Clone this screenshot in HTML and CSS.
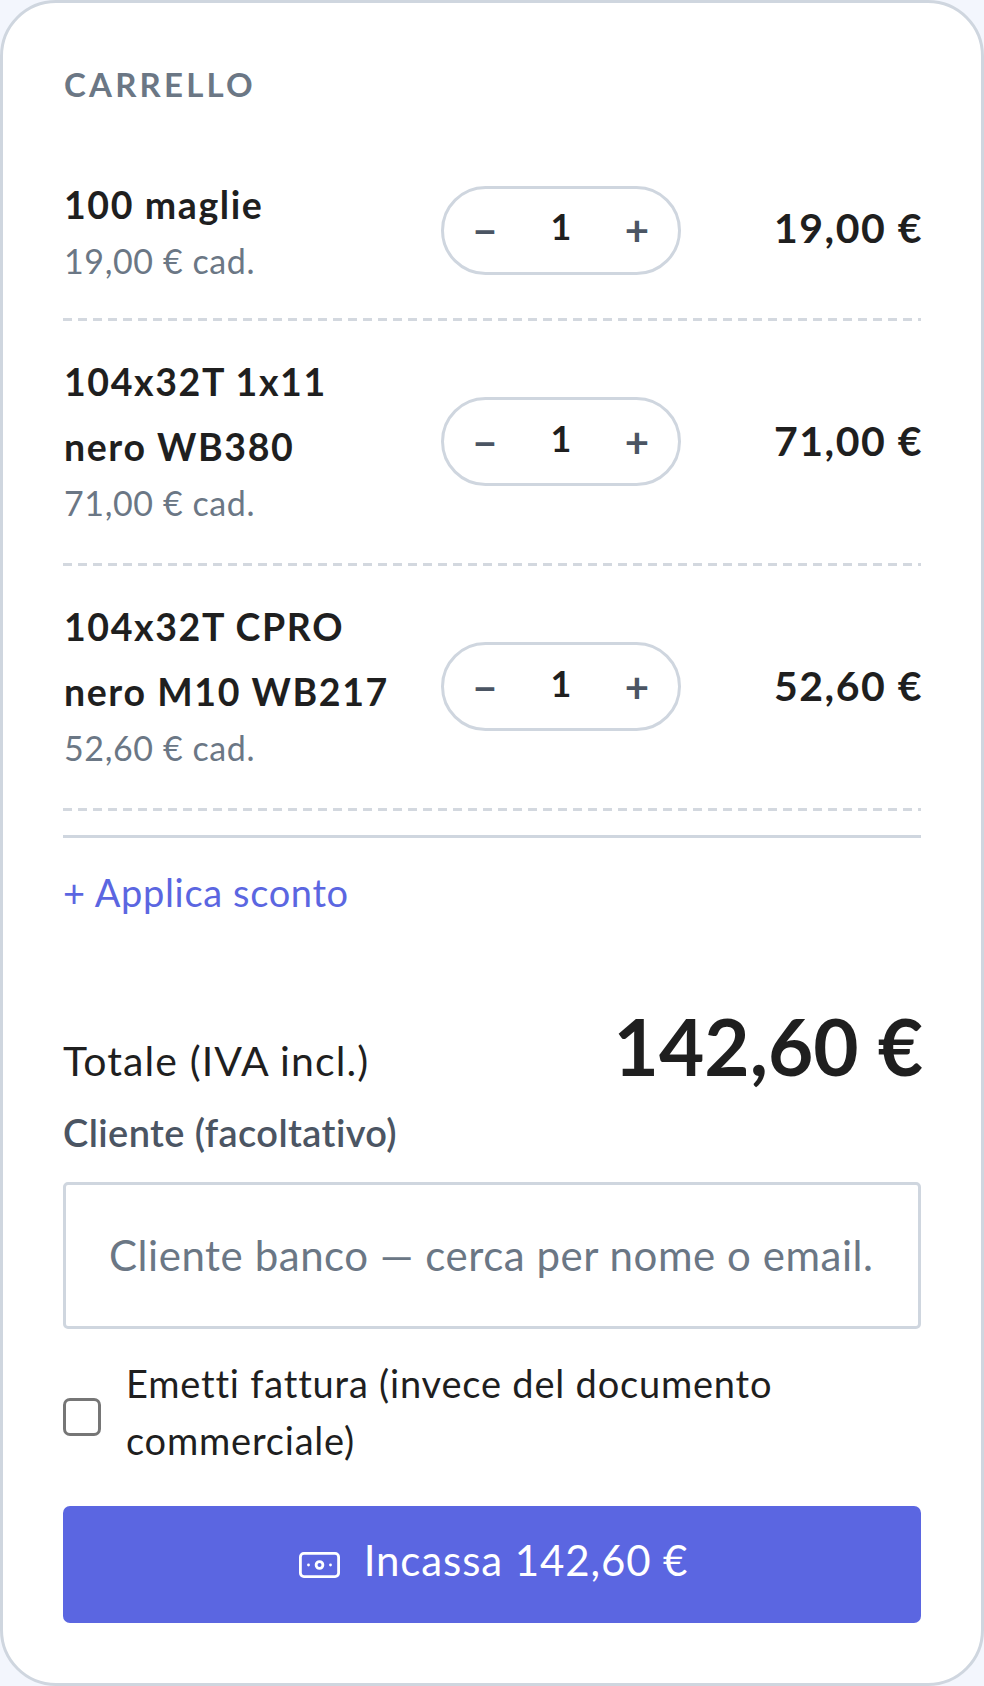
FILE: index.html
```html
<!DOCTYPE html>
<html lang="it">
<head>
  <meta charset="UTF-8">
  <title>Carrello</title>
  <link rel="stylesheet" href="styles.css">
</head>
<body>
  <div class="card">
    <h2 class="card-title">Carrello</h2>

    <div class="cart-row cart-row-first">
      <div class="item-info">
        <div class="item-name">100 maglie</div>
        <div class="item-unit">19,00 € cad.</div>
      </div>
      <div class="stepper">
        <button class="step-btn">−</button>
        <span class="step-qty">1</span>
        <button class="step-btn">+</button>
      </div>
      <div class="item-price">19,00 €</div>
    </div>

    <div class="cart-row">
      <div class="item-info">
        <div class="item-name">104x32T 1x11<br>nero WB380</div>
        <div class="item-unit">71,00 € cad.</div>
      </div>
      <div class="stepper">
        <button class="step-btn">−</button>
        <span class="step-qty">1</span>
        <button class="step-btn">+</button>
      </div>
      <div class="item-price">71,00 €</div>
    </div>

    <div class="cart-row">
      <div class="item-info">
        <div class="item-name">104x32T CPRO<br>nero M10 WB217</div>
        <div class="item-unit">52,60 € cad.</div>
      </div>
      <div class="stepper">
        <button class="step-btn">−</button>
        <span class="step-qty">1</span>
        <button class="step-btn">+</button>
      </div>
      <div class="item-price">52,60 €</div>
    </div>

    <div class="discount">
      <a class="discount-link" href="#">+ Applica sconto</a>
    </div>

    <div class="total-row">
      <span class="total-label">Totale (IVA incl.)</span>
      <span class="total-value">142,60 €</span>
    </div>

    <label class="field-label" for="cliente">Cliente (facoltativo)</label>
    <input class="field-input" id="cliente" type="text" placeholder="Cliente banco — cerca per nome o email.">

    <label class="invoice">
      <span class="invoice-box"></span>
      <span class="invoice-text">Emetti fattura (invece del documento commerciale)</span>
    </label>

    <button class="pay-btn">
      <svg class="pay-icon" viewBox="0 0 41 26" fill="none" stroke="#fff" stroke-width="2.8">
        <rect x="1.4" y="1.4" width="38.2" height="23.2" rx="3.5"/>
        <circle cx="20.5" cy="13" r="3.4"/>
        <circle cx="9.5" cy="13" r="1.4" fill="#fff" stroke="none"/>
        <circle cx="31.5" cy="13" r="1.4" fill="#fff" stroke="none"/>
      </svg>
      <span>Incassa 142,60 €</span>
    </button>
  </div>
</body>
</html>
```

FILE: styles.css
```css
* {
  box-sizing: border-box;
}

body {
  margin: 0;
  background: #f3f6fd;
  font-family: 'Lato', 'Noto Sans', sans-serif;
  color: #1f1f1f;
}

.card {
  height: 1686px;
  padding: 56px 60px 60px;
  background: #fff;
  border: 3px solid #cfd6df;
  border-radius: 56px;
}

.card-title {
  margin: 0 0 32px;
  padding-left: 1px;
  font-size: 33px;
  line-height: 50px;
  font-weight: 700;
  letter-spacing: 3.2px;
  text-transform: uppercase;
  color: #6b7785;
}

/* dashes are 9 on, 6 off, longer than what border: dashed draws at 3px */
.cart-row {
  display: flex;
  align-items: center;
  padding: 29px 0 31px;
  background: repeating-linear-gradient(90deg, #d3d8df 0 9px, transparent 9px 15px) left bottom / 100% 3px no-repeat;
}

.cart-row-first {
  padding: 32px 0 28px;
}

.cart-row-first .stepper {
  margin-bottom: 6px;
}

.cart-row-first .item-price {
  margin-bottom: 10px;
}

.item-info {
  width: 378px;
  flex-shrink: 0;
  padding-left: 1px;
}

.item-name {
  font-size: 37.5px;
  line-height: 64.4px;
  font-weight: 700;
  letter-spacing: 1.6px;
}

.item-unit {
  margin-top: -5px;
  padding-bottom: 4px;
  font-size: 34px;
  line-height: 57px;
  letter-spacing: 0.6px;
  color: #6b7785;
}

.stepper {
  width: 240px;
  height: 89px;
  flex-shrink: 0;
  display: flex;
  align-items: center;
  justify-content: space-between;
  margin-bottom: 2px;
  padding: 0 21px;
  border: 3px solid #cfd6df;
  border-radius: 45px;
}

.step-btn {
  width: 40px;
  padding: 0;
  border: none;
  background: none;
  font-family: inherit;
  font-size: 42px;
  line-height: 40px;
  font-weight: 700;
  color: #4b5563;
}

.step-qty {
  font-size: 36px;
  line-height: 40px;
  font-weight: 700;
  margin-top: -8px;
}

.item-price {
  flex: 1;
  margin-right: -2px;
  margin-bottom: 4px;
  text-align: right;
  font-size: 41px;
  line-height: 60px;
  font-weight: 700;
  letter-spacing: 1.5px;
}

.discount {
  margin-top: 24px;
  padding-top: 24px;
  border-top: 3px solid #cfd6df;
}

.discount-link {
  display: block;
  font-size: 38px;
  line-height: 60px;
  letter-spacing: 0.65px;
  color: #5b66e1;
  text-decoration: none;
}

.total-row {
  display: flex;
  justify-content: space-between;
  align-items: baseline;
  margin-top: 80px;
}

.total-label {
  font-size: 41px;
  line-height: 88px;
  letter-spacing: 1.1px;
}

.total-value {
  margin-right: -2px;
  font-size: 78.2px;
  line-height: 88px;
  font-weight: 700;
}

.field-label {
  display: block;
  margin-top: 2px;
  font-size: 38px;
  line-height: 50px;
  font-weight: 600;
  letter-spacing: 0.4px;
  color: #4b5563;
}

.field-input {
  display: block;
  width: 100%;
  height: 147px;
  margin-top: 25px;
  padding: 0 43px 2px;
  border: 3px solid #cfd6df;
  border-radius: 5px;
  background: #fff;
  font-family: inherit;
  font-size: 42px;
  letter-spacing: 0.55px;
}

.field-input::placeholder {
  color: #6b7785;
  opacity: 1;
}

.invoice {
  display: flex;
  align-items: center;
  gap: 25px;
  margin-top: 26px;
}

.invoice-box {
  width: 38px;
  height: 38px;
  flex-shrink: 0;
  margin-top: 9px;
  border: 3px solid #767676;
  border-radius: 7px;
  background: #fff;
}

.invoice-text {
  font-size: 38px;
  line-height: 57px;
  letter-spacing: 0.8px;
}

.pay-btn {
  display: flex;
  align-items: center;
  justify-content: center;
  gap: 24px;
  width: 100%;
  height: 117px;
  margin-top: 37px;
  padding-bottom: 10px;
  border: none;
  border-radius: 7px;
  background: #5b66e1;
  color: #fff;
  font-family: inherit;
  font-size: 42px;
  letter-spacing: 0.9px;
}

.pay-icon {
  width: 41px;
  height: 26px;
  margin-top: 9px;
  margin-left: 3px;
}
```
